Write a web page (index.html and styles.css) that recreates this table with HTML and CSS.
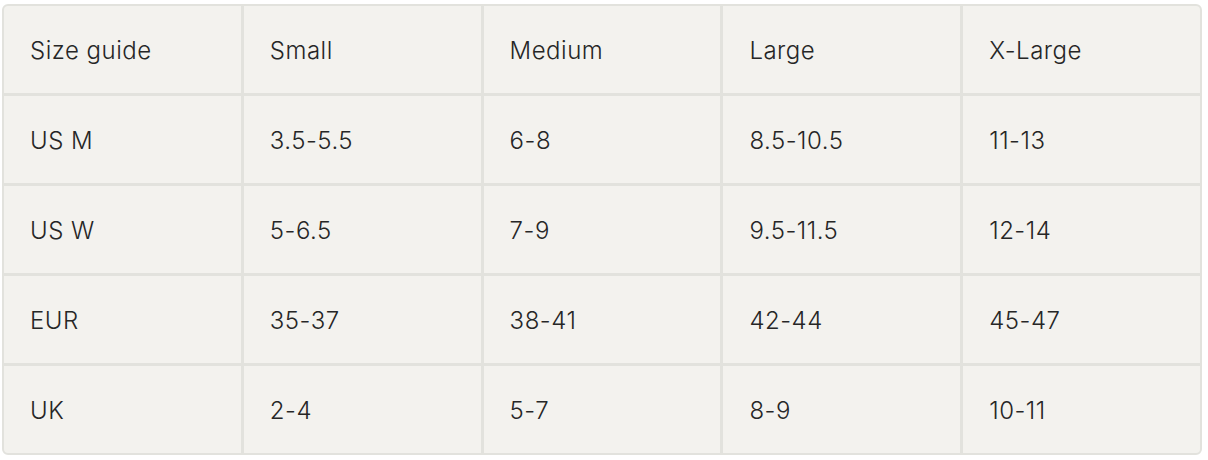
FILE: index.html
```html
<!DOCTYPE html>
<html lang="en">
<head>
<meta charset="utf-8">
<title>Size guide</title>
<link rel="stylesheet" href="styles.css">
</head>
<body>
<div class="wrap">
  <div class="sizes" role="table">
    <div class="cell head">Size guide</div>
    <div class="cell head">Small</div>
    <div class="cell head">Medium</div>
    <div class="cell head">Large</div>
    <div class="cell head">X-Large</div>

    <div class="cell">US M</div>
    <div class="cell">3.5-5.5</div>
    <div class="cell">6-8</div>
    <div class="cell">8.5-10.5</div>
    <div class="cell">11-13</div>

    <div class="cell">US W</div>
    <div class="cell">5-6.5</div>
    <div class="cell">7-9</div>
    <div class="cell">9.5-11.5</div>
    <div class="cell">12-14</div>

    <div class="cell">EUR</div>
    <div class="cell">35-37</div>
    <div class="cell">38-41</div>
    <div class="cell">42-44</div>
    <div class="cell">45-47</div>

    <div class="cell">UK</div>
    <div class="cell">2-4</div>
    <div class="cell">5-7</div>
    <div class="cell">8-9</div>
    <div class="cell">10-11</div>
  </div>
</div>
</body>
</html>
```
FILE: styles.css
```css
html, body {
  margin: 0;
  padding: 0;
  background: #ffffff;
}
.wrap {
  padding: 4px 6px 0 2px;
}
.sizes {
  width: 1200px;
  box-sizing: border-box;
  display: grid;
  grid-template-columns: repeat(5, 1fr);
  grid-auto-rows: 87px;
  gap: 3px;
  background: #e2e2dd;
  border: 2px solid #e2e2dd;
  border-radius: 6px;
  overflow: hidden;
  font-family: Inter, "Noto Sans", sans-serif;
  font-size: 24px;
  font-weight: 300;
  letter-spacing: 0.5px;
  color: #262626;
}
.cell {
  background: #f3f2ee;
  display: flex;
  align-items: center;
  padding: 2px 0 0 26px;
}
```
